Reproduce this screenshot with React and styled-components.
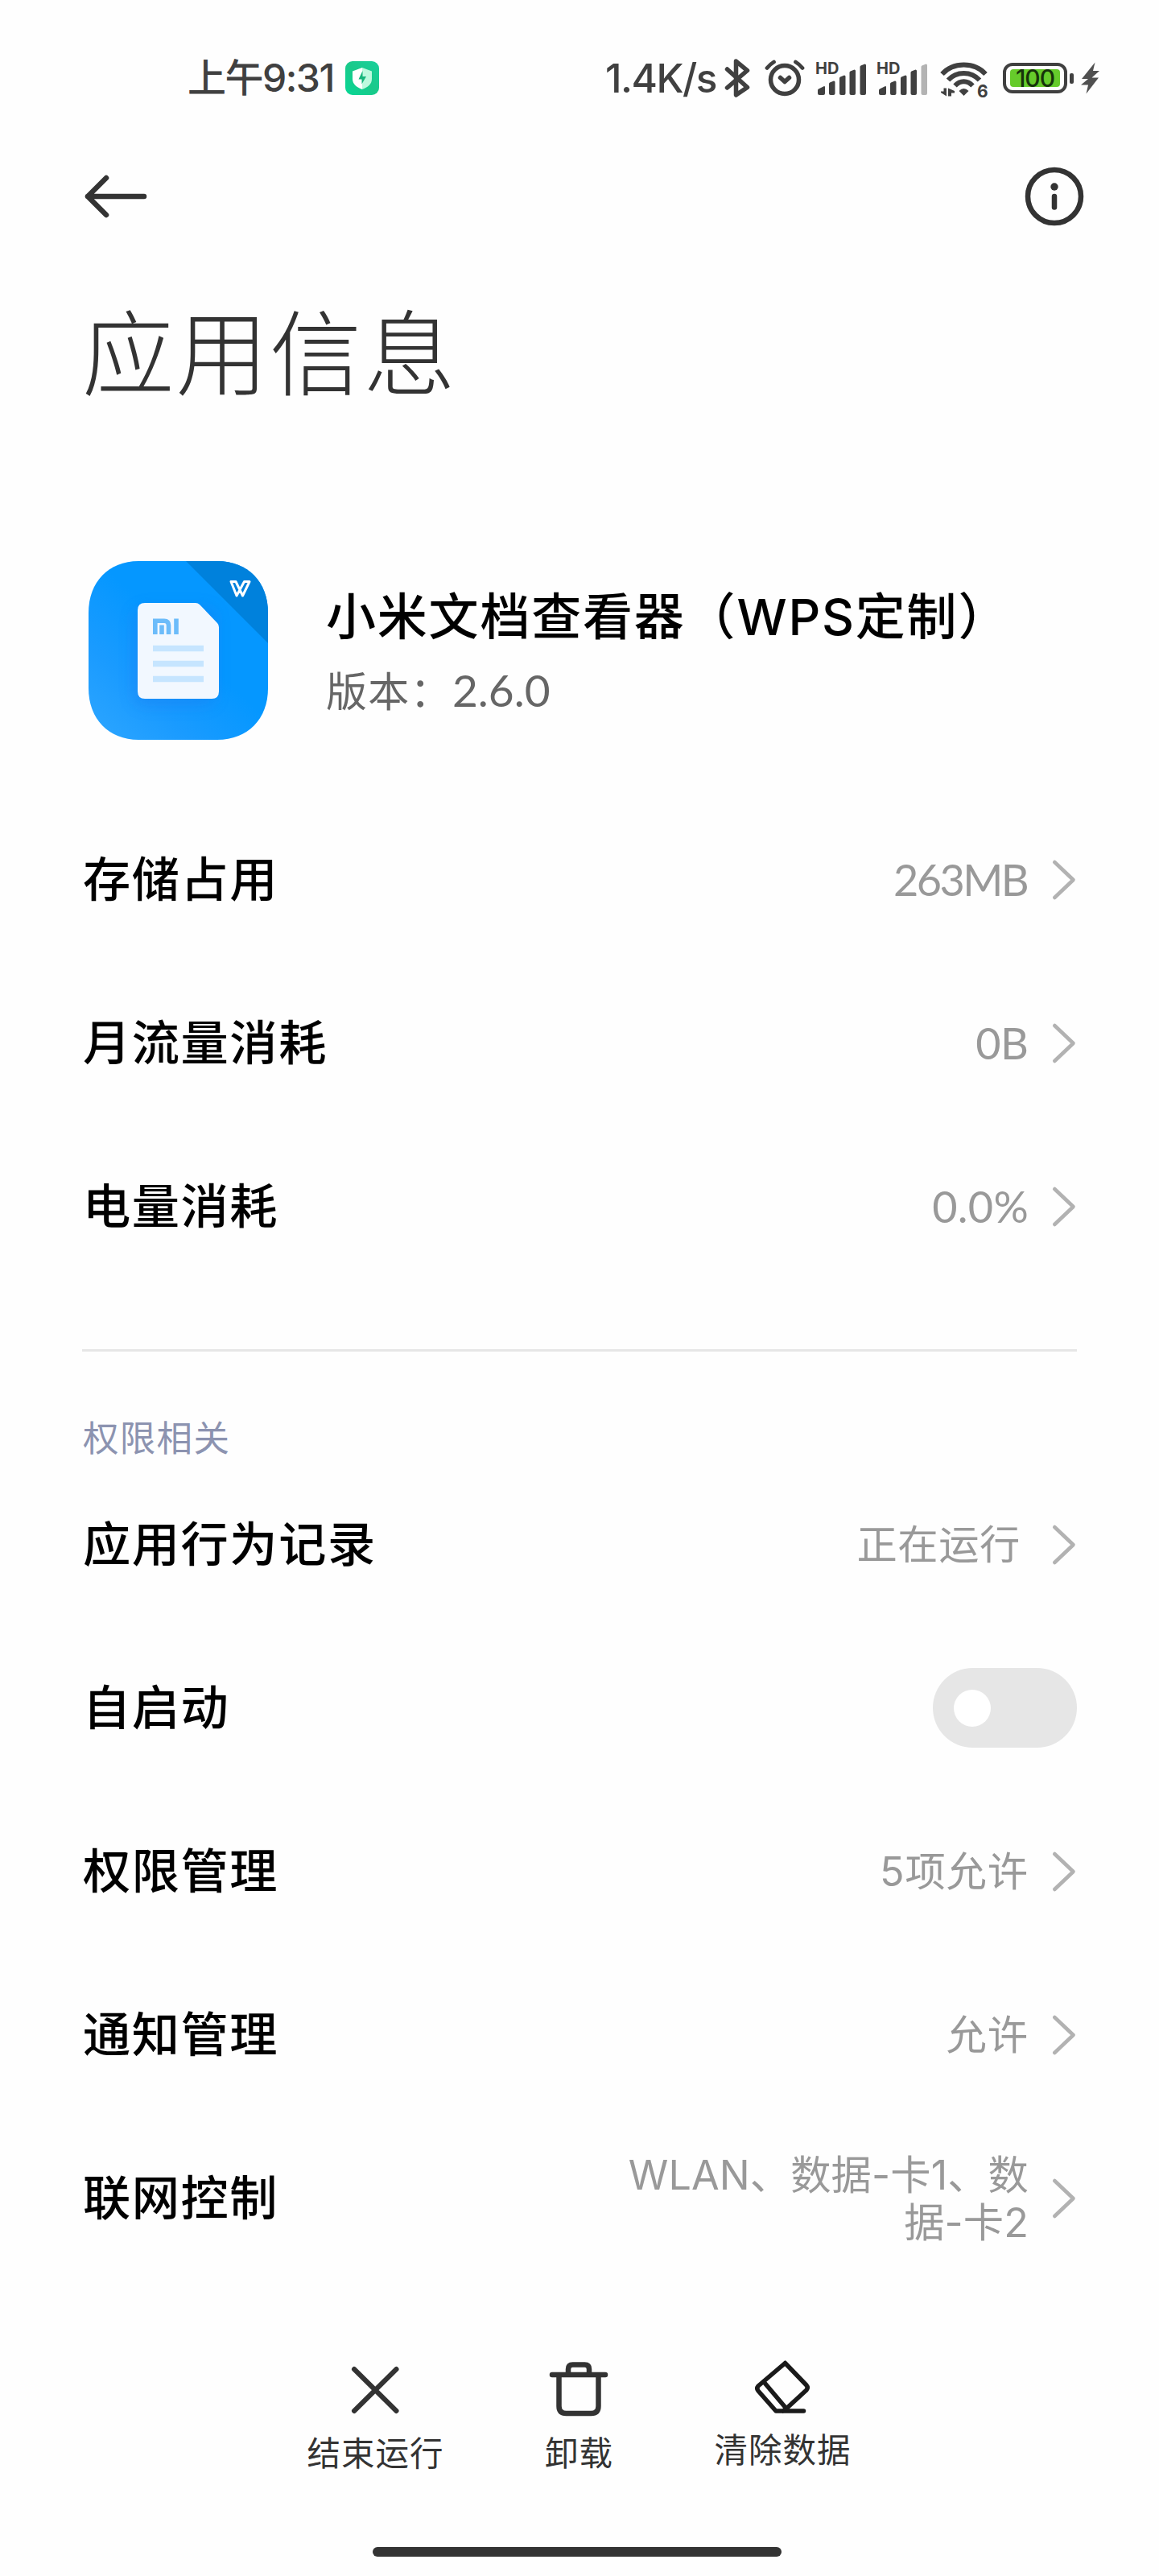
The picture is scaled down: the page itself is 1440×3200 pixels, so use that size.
import React from 'react';
import styled, { createGlobalStyle } from 'styled-components';

const GlobalStyle = createGlobalStyle`
  * { box-sizing: border-box; }
  body {
    margin: 0;
    background: #fefefe;
    font-family: Inter, "Noto Sans CJK SC", sans-serif;
    color: #000;
  }
`;

const Screen = styled.div`
  width: 1440px;
  height: 3200px;
  display: flex;
  flex-direction: column;
  background: #fefefe;
  overflow: hidden;
`;

const Icon = styled.svg`
  display: block;
  flex: none;
  margin-left: ${(p) => p.$ml || 0}px;
  margin-right: ${(p) => p.$mr || 0}px;
  margin-top: ${(p) => p.$mt || 0}px;
`;

const StatusBar = styled.header`
  height: 194px;
  padding: 0 74px 0 233px;
  display: flex;
  align-items: center;
  justify-content: space-between;
  color: #404040;
`;

const StatusGroup = styled.div`
  display: flex;
  align-items: center;
  height: 60px;
`;

const Clock = styled.span`
  font-size: 48px;
  line-height: 60px;
  font-weight: 500;
  letter-spacing: -1.5px;
  width: 196px;
  white-space: nowrap;
`;

const Speed = styled.span`
  font-size: 49.5px;
  line-height: 60px;
  font-weight: 450;
  letter-spacing: -1.5px;
  white-space: nowrap;
  width: 148px;
`;

const NavBar = styled.nav`
  height: 100px;
  padding: 0 93px 0 105px;
  display: flex;
  align-items: center;
  justify-content: space-between;
`;

const Title = styled.h1`
  margin: 63px 0 0 102px;
  height: 167px;
  font-size: 114.5px;
  line-height: 167px;
  font-weight: 250;
  letter-spacing: 2px;
  color: #333;
`;

const AppCard = styled.section`
  display: flex;
  margin: 173px 0 0 110px;
  height: 222px;
  align-items: center;
`;

const AppText = styled.div`
  margin-left: 72px;
  padding-top: 11px;
  display: flex;
  flex-direction: column;
`;

const AppName = styled.h2`
  margin: 0;
  font-size: 62px;
  line-height: 90px;
  font-weight: 500;
  letter-spacing: 1.8px;
  white-space: nowrap;
`;

const AppVersion = styled.p`
  margin: 0;
  font-size: 51px;
  line-height: 90px;
  letter-spacing: 1.3px;
  color: #666;
  white-space: nowrap;
`;

const VersionNumber = styled.span`
  font-family: Lato, sans-serif;
  font-size: 55px;
  letter-spacing: 0;
`;

const List = styled.ul`
  list-style: none;
  margin: ${(p) => p.$mt}px 0 0;
  padding: 0 102px 0 103px;
`;

const Row = styled.li`
  height: 203px;
  display: flex;
  align-items: center;
`;

const RowLabel = styled.span`
  flex: 1;
  font-size: 59.2px;
  line-height: 84px;
  font-weight: 500;
  letter-spacing: 1.6px;
  white-space: nowrap;
`;

const RowValue = styled.span`
  font-family: ${(p) => (p.$latin ? 'Lato, ' : 'Inter, ')}"Noto Sans CJK SC", sans-serif;
  font-size: ${(p) => (p.$latin ? 54 : 50.3)}px;
  line-height: 59px;
  letter-spacing: ${(p) => (p.$spacing === undefined ? 0.9 : p.$spacing)}px;
  color: #999;
  text-align: right;
  white-space: pre-line;
  margin-right: ${(p) => p.$mr || 0}px;
`;

const Switch = styled.button`
  width: 179px;
  height: 99px;
  border: 0;
  border-radius: 50px;
  background: #e6e6e6;
  padding: 0 26px;
  display: flex;
  align-items: center;
`;

const Knob = styled.span`
  width: 46px;
  height: 46px;
  border-radius: 50%;
  background: #fff;
`;

const Divider = styled.hr`
  margin: 76px 102px 0;
  height: 3px;
  border: 0;
  background: #e6e6e6;
`;

const SectionTitle = styled.h3`
  margin: 76px 0 0 103px;
  height: 64px;
  font-size: 44.5px;
  line-height: 64px;
  font-weight: 400;
  letter-spacing: 1.3px;
  color: #8c93b0;
`;

const ActionBar = styled.footer`
  margin: 97px 0 0 339px;
  display: flex;
`;

const Action = styled.div`
  width: 253px;
  height: 170px;
  display: flex;
  flex-direction: column;
  align-items: center;
`;

const ActionLabel = styled.span`
  margin-top: ${(p) => p.$mt}px;
  padding-left: 2px;
  font-size: 41.5px;
  line-height: 60px;
  letter-spacing: 1px;
  color: #333;
`;

const HomeIndicator = styled.div`
  width: 508px;
  height: 12px;
  margin: 65px 0 0 463px;
  border-radius: 6px;
  background: #333;
`;

const Shield = () => (
  <Icon width="42" height="42" viewBox="429 76 42 42">
    <defs>
      <linearGradient id="shieldBg" x1="0" y1="1" x2="1" y2="0">
        <stop offset="0" stopColor="#06d795" />
        <stop offset="0.5" stopColor="#1ac98a" />
        <stop offset="1" stopColor="#1ad09c" />
      </linearGradient>
    </defs>
    <rect x="429" y="76" width="42" height="42" rx="9" fill="url(#shieldBg)" />
    <path d="M450 84L438 88.500V98C438 104.500 443 108.500 450 111Z" fill="#fff" />
    <path d="M450 84L462 88.500V98C462 104.500 457 108.500 450 111Z" fill="#bdf9de" />
    <path d="M450.500 88L445.500 98.500H449.500V104.500L455 95H450.500Z" fill="#16b67c" />
  </Icon>
);

const Bluetooth = () => (
  <Icon width="32" height="50" viewBox="900 71 32 50">
    <path d="M903.500 85L928.500 107.500L914.500 117V75L928.500 86.500L903.500 108" fill="none" stroke="#404040" strokeWidth="5.500" strokeLinecap="round" strokeLinejoin="round" />
  </Icon>
);

const Alarm = () => (
  <Icon $ml={18} width="50" height="50" viewBox="949.500 71 50 50">
    <g fill="none" stroke="#404040" strokeWidth="5.500" strokeLinecap="round" strokeLinejoin="round">
      <circle cx="974.500" cy="98" r="17.500" />
      <path d="M969 95.500L974.500 100.500L980 95.500" />
      <path d="M952.500 83.500C955 80.500 957.500 78 961 76M996.500 83.500C994 80.500 991.500 78 988 76" strokeWidth="4.800" />
    </g>
  </Icon>
);

const SignalBox = styled.div`
  position: relative;
  width: 64px;
  height: 50px;
  margin-left: ${(p) => p.$ml}px;
`;

const HdTag = styled.span`
  position: absolute;
  left: 0;
  top: 3px;
  font-size: 20px;
  line-height: 20px;
  font-weight: 700;
  color: #404040;
`;

const Signal = ({ ml, weak }) => (
  <SignalBox $ml={ml}>
    <Icon width="64" height="50" viewBox="1013 71 64 50">
      <g fill="#404040">
        <path d="M1016 111Q1016 110 1017 109.500L1024 106Q1025 106 1025 107V115Q1025 117 1023 117H1018Q1016 117 1016 115Z" />
        <path d="M1030 103Q1030 102 1031 101.500L1036 99.500Q1037.500 99.500 1037.500 101V115Q1037.500 117 1035.500 117H1032Q1030 117 1030 115Z" />
        <path d="M1043 96Q1043 95 1044 94.500L1049 92.500Q1050.500 92.500 1050.500 94V115Q1050.500 117 1048.500 117H1045Q1043 117 1043 115Z" />
        <path d="M1055.500 89Q1055.500 88 1056.500 87.500L1061.500 85.500Q1063 85.500 1063 87V115Q1063 117 1061 117H1057.500Q1055.500 117 1055.500 115Z" />
        <path fill={weak ? '#b3b3b3' : '#404040'} d="M1068.500 82Q1068.500 81 1069.500 80.500L1074.500 78.500Q1076 78.500 1076 80V115Q1076 117 1074 117H1070.500Q1068.500 117 1068.500 115Z" />
      </g>
    </Icon>
    <HdTag>HD</HdTag>
  </SignalBox>
);

const WifiBox = styled.div`
  position: relative;
  width: 60px;
  height: 50px;
  margin-left: 15px;
`;

const WifiTag = styled.span`
  position: absolute;
  left: 46px;
  top: 31px;
  font-size: 21px;
  line-height: 22px;
  font-weight: 700;
  color: #404040;
`;

const Wifi = () => (
  <WifiBox>
    <Icon width="60" height="50" viewBox="1168 71 60 50">
      <g fill="none" stroke="#404040" strokeWidth="6">
        <path d="M1170.500 91C1184 75.500 1211 75.500 1224.500 91" />
        <path d="M1178 98.500C1188 87 1207 87 1217 98.500" />
        <path d="M1186.500 105.500C1193 98.500 1202 98.500 1208.500 105.500" />
      </g>
      <path d="M1191.500 112Q1197.500 106 1203.500 112L1197.500 118Z" fill="#404040" />
      <path d="M1172.500 108.500H1176V118.500L1169 114V112.500H1172.500ZM1178 108.500L1186 112V114.500H1182V118.500H1178Z" fill="#404040" />
    </Icon>
    <WifiTag>6</WifiTag>
  </WifiBox>
);

const BatteryShell = styled.div`
  width: 80px;
  height: 38px;
  margin-left: 18px;
  padding: 4px 5px;
  border: 4px solid #404040;
  border-radius: 12px;
`;

const BatteryFill = styled.div`
  height: 100%;
  border-radius: 4px;
  background: #66cb2b;
  color: #16330a;
  font-family: Inter, sans-serif;
  font-size: 30px;
  line-height: 23px;
  font-weight: 450;
  letter-spacing: -1px;
  text-align: center;
`;

const BatteryTip = styled.div`
  width: 5px;
  height: 13px;
  margin-left: 3px;
  border-radius: 2px;
  background: #404040;
`;

const Bolt = () => (
  <Icon $ml={9} width="23" height="40" viewBox="1343 77 23 40">
    <path d="M1360.500 77.500L1344 98H1352L1343 105.500H1352L1349.500 116.500L1365 96.500H1356.500L1366 88H1358Z" fill="#505050" />
  </Icon>
);

const BackArrow = () => (
  <Icon width="78" height="54" viewBox="105 217 78 54">
    <path d="M132 221L109 244L132 267M109 244H179" fill="none" stroke="#333" strokeWidth="6.500" strokeLinecap="round" strokeLinejoin="round" />
  </Icon>
);

const Info = () => (
  <Icon width="74" height="74" viewBox="1272.500 206.500 74 74">
    <circle cx="1309.500" cy="243.500" r="33" fill="none" stroke="#333" strokeWidth="6.500" />
    <circle cx="1309.500" cy="231.500" r="4.700" fill="#333" />
    <path d="M1309.500 243.500V257" stroke="#333" strokeWidth="6.500" strokeLinecap="round" />
  </Icon>
);

const AppIcon = () => (
  <Icon width="223" height="222" viewBox="0 0 223 222">
    <defs>
      <linearGradient id="appBg" x1="0" y1="1" x2="0.75" y2="0.2">
        <stop offset="0" stopColor="#2ea6ff" />
        <stop offset="0.35" stopColor="#1a9bff" />
        <stop offset="0.7" stopColor="#0597ff" />
        <stop offset="1" stopColor="#0597ff" />
      </linearGradient>
      <clipPath id="appShape">
        <path d="M111 0H160C198 0 223 26 223 64V158C223 196 198 222 160 222H62C25 222 0 196 0 158V64C0 26 25 0 62 0Z" />
      </clipPath>
      <filter id="docShadow" x="-40%" y="-40%" width="180%" height="180%">
        <feGaussianBlur stdDeviation="9" />
      </filter>
    </defs>
    <g clipPath="url(#appShape)">
      <rect width="223" height="222" fill="url(#appBg)" />
      <path d="M121 0H223V102Z" fill="#0081dc" />
      <rect x="56" y="58" width="102" height="122" rx="14" fill="#1c7df0" opacity="0.450" filter="url(#docShadow)" />
      <path d="M70 52H133Q136 52 138 54L160 77Q162 79 162 82V162Q162 171 153 171H70Q61 171 61 162V61Q61 52 70 52Z" fill="#f2f8ff" />
      <path d="M82.800 91V74.300H94Q99.500 74.300 99.500 80V91M91 79.500V91M109 71.500V91" fill="none" stroke="#6cbcfa" strokeWidth="5.600" />
      <path d="M80 108.500H143M80 127.500H143M80 146.500H143" stroke="#c6e5ff" strokeWidth="7.600" />
      <path d="M177 25.500H183L191.500 43L200 25.500H193.500L184 43Z" fill="none" stroke="#fff" strokeWidth="3" strokeLinejoin="round" />
    </g>
  </Icon>
);

const Chevron = () => (
  <Icon $ml={28.5} $mr={1.5} width="30" height="52" viewBox="0 0 30 52">
    <path d="M3.300 4L26.500 26L3.300 48" fill="none" stroke="#b2b2b2" strokeWidth="4.600" strokeLinecap="round" strokeLinejoin="round" />
  </Icon>
);

const CloseIcon = () => (
  <Icon $mt={9} width="62" height="62" viewBox="435 2938 62 62">
    <path d="M440 2943L492.500 2995M492.500 2943L440 2995" stroke="#333" strokeWidth="6" strokeLinecap="round" />
  </Icon>
);

const TrashIcon = () => (
  <Icon $mt={3} width="74" height="72" viewBox="682 2932 74 72">
    <g fill="none" stroke="#333" strokeWidth="6.500" strokeLinecap="round" strokeLinejoin="round">
      <path d="M686 2950H752" />
      <path d="M706 2949V2943Q706 2937.500 711.500 2937.500H726.500Q732 2937.500 732 2943V2949" />
      <path d="M694.500 2951V2989Q694.500 2998 703.500 2998H734.500Q743.500 2998 743.500 2989V2951" />
    </g>
  </Icon>
);

const EraserIcon = () => (
  <Icon $mt={2} width="74" height="68" viewBox="934 2931 74 68">
    <path d="M974.500 2935.500L1001 2963Q1003.500 2966 1001 2969L976 2992M974.500 2935.500L941 2964Q938.500 2967 941 2970L963 2995H997.500M948.500 2959.500L976 2992L972 2995" fill="none" stroke="#1a1a1a" strokeWidth="5.500" strokeLinecap="round" strokeLinejoin="round" />
  </Icon>
);

const usage = [
  { label: '存储占用', value: '263MB', latin: true, spacing: -2.6, mr: 2 },
  { label: '月流量消耗', value: '0B', latin: true, spacing: -0.5, mr: 0.5 },
  { label: '电量消耗', value: '0.0%', latin: true, spacing: 0.3 },
];

const permissions = [
  { label: '应用行为记录', value: '正在运行', mr: 10, spacing: 0.6 },
  { label: '自启动', toggle: true },
  { label: '权限管理', value: '5项允许' },
  { label: '通知管理', value: '允许' },
  { label: '联网控制', value: 'WLAN、数据-卡1、数\n据-卡2', spacing: 0.1 },
];

const Rows = ({ items, mt }) => (
  <List $mt={mt}>
    {items.map((item) => (
      <Row key={item.label}>
        <RowLabel>{item.label}</RowLabel>
        {item.toggle ? (
          <Switch role="switch" aria-checked="false">
            <Knob />
          </Switch>
        ) : (
          <>
            <RowValue $latin={item.latin} $spacing={item.spacing} $mr={item.mr}>{item.value}</RowValue>
            <Chevron />
          </>
        )}
      </Row>
    ))}
  </List>
);

export default function App() {
  return (
    <Screen>
      <GlobalStyle />
      <StatusBar>
        <StatusGroup>
          <Clock>上午9:31</Clock>
          <Shield />
        </StatusGroup>
        <StatusGroup>
          <Speed>1.4K/s</Speed>
          <Bluetooth />
          <Alarm />
          <Signal ml={13} />
          <Signal ml={12} weak />
          <Wifi />
          <BatteryShell>
            <BatteryFill>100</BatteryFill>
          </BatteryShell>
          <BatteryTip />
          <Bolt />
        </StatusGroup>
      </StatusBar>
      <NavBar>
        <BackArrow />
        <Info />
      </NavBar>
      <Title>应用信息</Title>
      <AppCard>
        <AppIcon />
        <AppText>
          <AppName>小米文档查看器（WPS定制）</AppName>
          <AppVersion>版本：<VersionNumber>2.6.0</VersionNumber></AppVersion>
        </AppText>
      </AppCard>
      <Rows items={usage} mt={72} />
      <Divider />
      <SectionTitle>权限相关</SectionTitle>
      <Rows items={permissions} mt={-2} />
      <ActionBar>
        <Action>
          <CloseIcon />
          <ActionLabel $mt={18}>结束运行</ActionLabel>
        </Action>
        <Action>
          <TrashIcon />
          <ActionLabel $mt={14}>卸载</ActionLabel>
        </Action>
        <Action>
          <EraserIcon />
          <ActionLabel $mt={15}>清除数据</ActionLabel>
        </Action>
      </ActionBar>
      <HomeIndicator />
    </Screen>
  );
}
